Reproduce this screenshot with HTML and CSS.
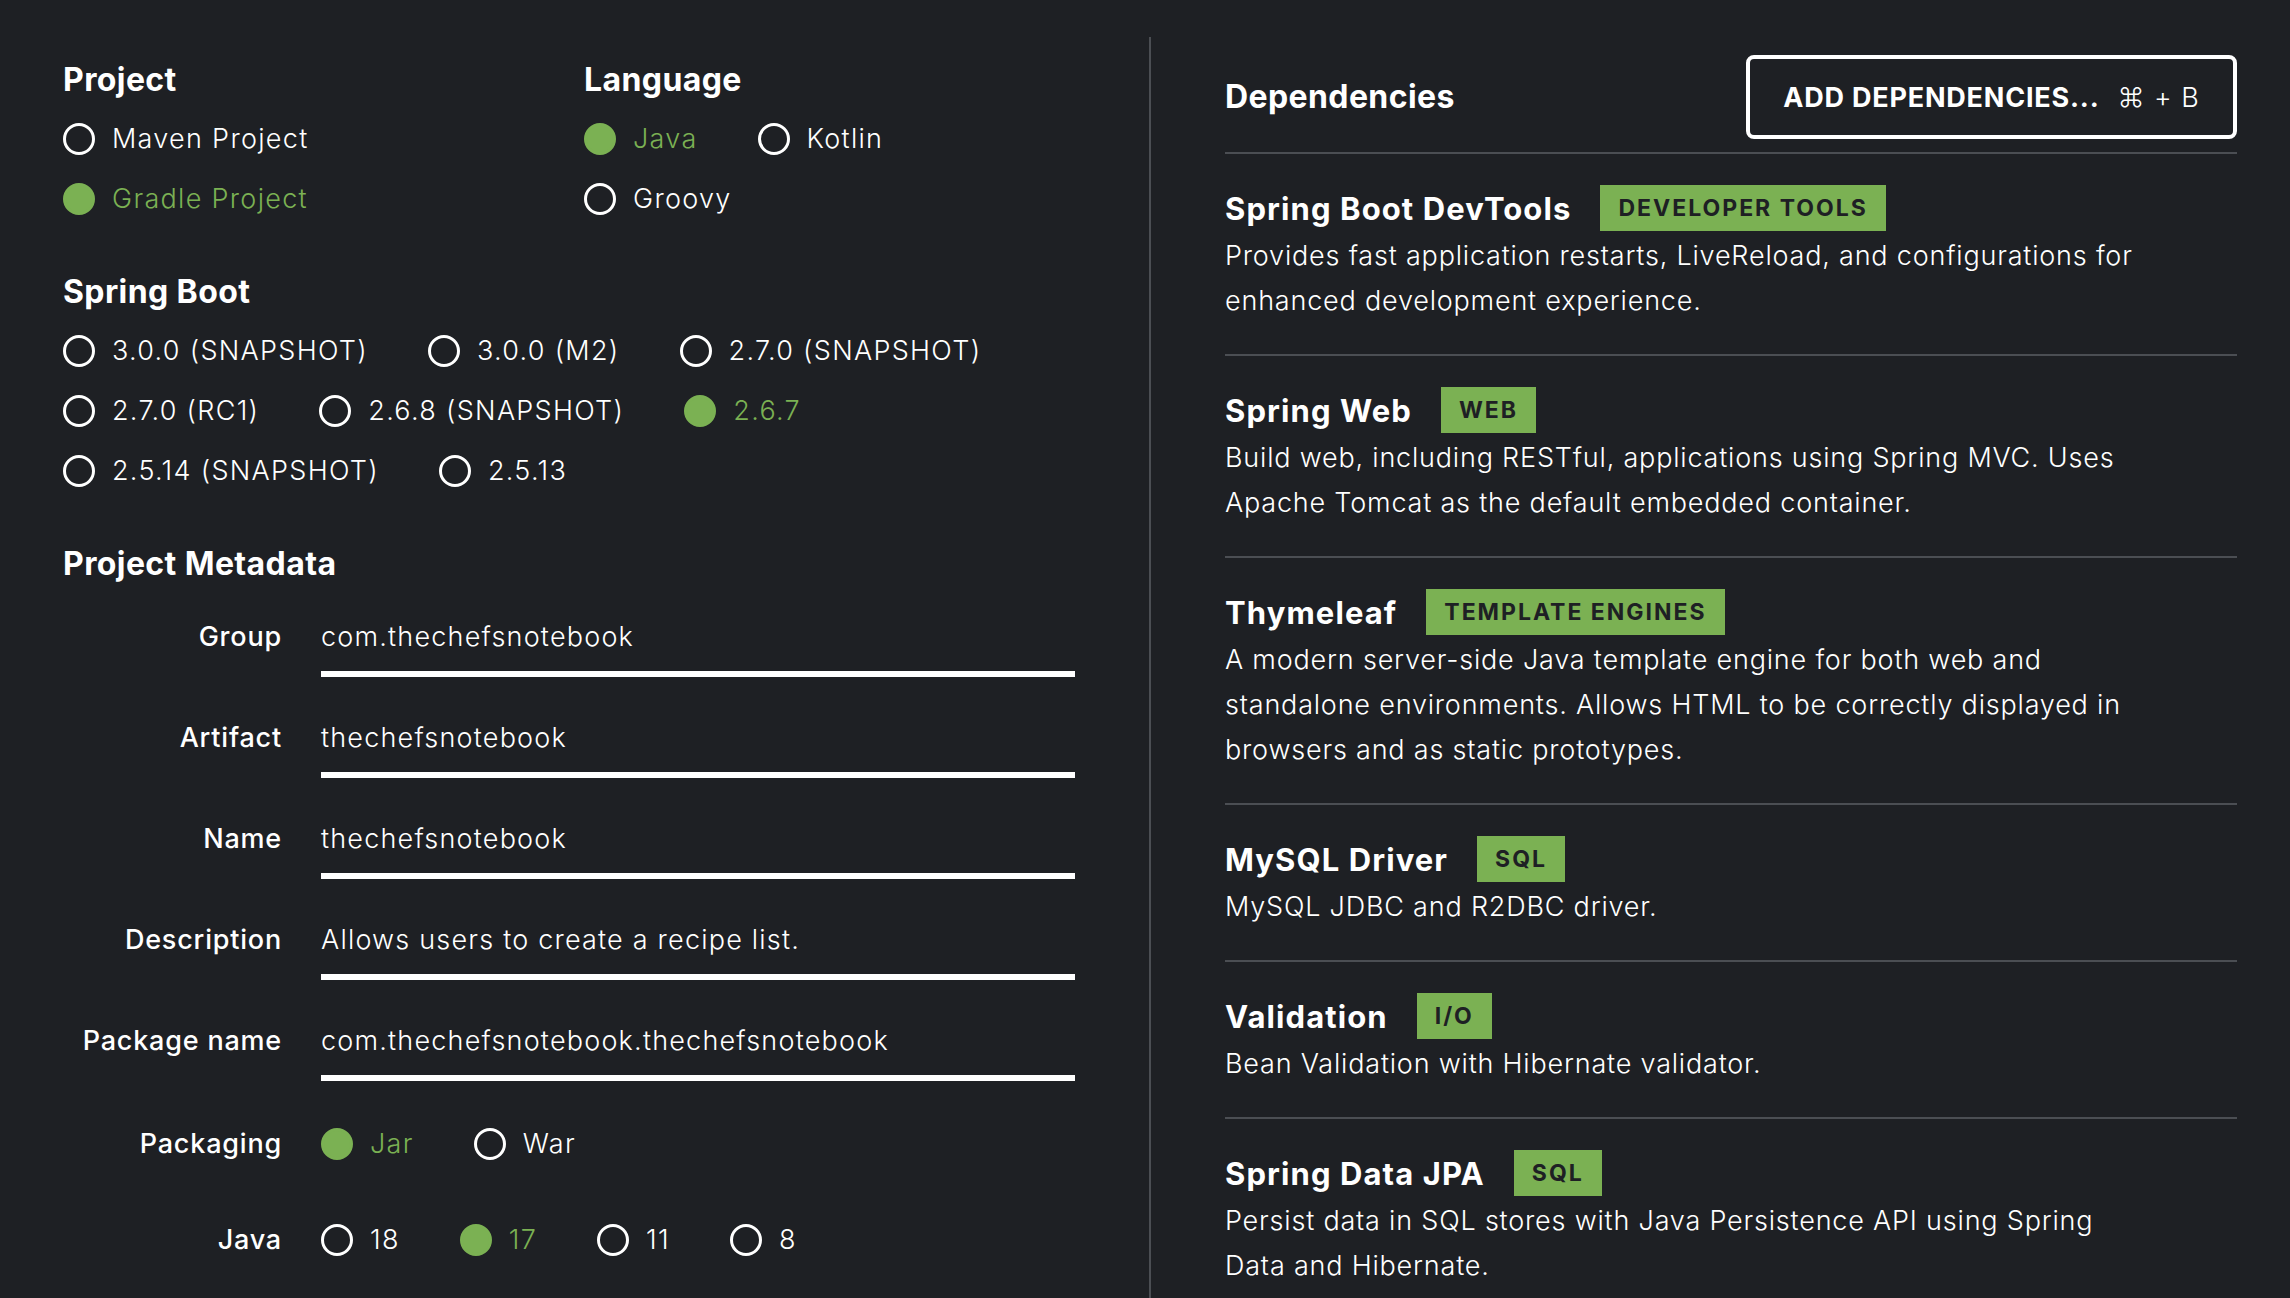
FILE: index.html
```html
<!DOCTYPE html>
<html lang="en">
<head>
<meta charset="utf-8">
<title>Spring Initializr</title>
<link rel="stylesheet" href="styles.css">
</head>
<body>
<div class="page">
  <div class="left">
    <div class="top">
      <div class="group project">
        <h2>Project</h2>
        <div class="opt-row"><span class="radio">Maven Project</span></div>
        <div class="opt-row"><span class="radio on">Gradle Project</span></div>
      </div>
      <div class="group">
        <h2>Language</h2>
        <div class="opt-row"><span class="radio on">Java</span><span class="radio">Kotlin</span></div>
        <div class="opt-row"><span class="radio">Groovy</span></div>
      </div>
    </div>
    <div class="group section">
      <h2>Spring Boot</h2>
      <div class="opt-row"><span class="radio">3.0.0 (SNAPSHOT)</span><span class="radio">3.0.0 (M2)</span><span class="radio">2.7.0 (SNAPSHOT)</span></div>
      <div class="opt-row"><span class="radio">2.7.0 (RC1)</span><span class="radio">2.6.8 (SNAPSHOT)</span><span class="radio on">2.6.7</span></div>
      <div class="opt-row"><span class="radio">2.5.14 (SNAPSHOT)</span><span class="radio">2.5.13</span></div>
    </div>
    <div class="group section meta">
      <h2>Project Metadata</h2>
      <div class="field"><span class="label">Group</span><span class="input">com.thechefsnotebook</span></div>
      <div class="field"><span class="label">Artifact</span><span class="input">thechefsnotebook</span></div>
      <div class="field"><span class="label">Name</span><span class="input">thechefsnotebook</span></div>
      <div class="field"><span class="label">Description</span><span class="input">Allows users to create a recipe list.</span></div>
      <div class="field"><span class="label">Package name</span><span class="input">com.thechefsnotebook.thechefsnotebook</span></div>
      <div class="field choice"><span class="label">Packaging</span><div class="opts"><span class="radio on">Jar</span><span class="radio">War</span></div></div>
      <div class="field choice"><span class="label">Java</span><div class="opts"><span class="radio">18</span><span class="radio on">17</span><span class="radio">11</span><span class="radio">8</span></div></div>
    </div>
  </div>
  <div class="divider"></div>
  <div class="right">
    <div class="dep-head">
      <h2>Dependencies</h2>
      <div class="btn"><span class="btn-main">ADD DEPENDENCIES...</span><span class="btn-key">⌘ + B</span></div>
    </div>
    <div class="dep">
      <div class="dep-title"><h3>Spring Boot DevTools</h3><span class="badge">Developer Tools</span></div>
      <p>Provides fast application restarts, LiveReload, and configurations for enhanced development experience.</p>
    </div>
    <div class="dep">
      <div class="dep-title"><h3>Spring Web</h3><span class="badge">Web</span></div>
      <p>Build web, including RESTful, applications using Spring MVC. Uses Apache Tomcat as the default embedded container.</p>
    </div>
    <div class="dep">
      <div class="dep-title"><h3>Thymeleaf</h3><span class="badge">Template Engines</span></div>
      <p>A modern server-side Java template engine for both web and standalone environments. Allows HTML to be correctly displayed in browsers and as static prototypes.</p>
    </div>
    <div class="dep">
      <div class="dep-title"><h3>MySQL Driver</h3><span class="badge">SQL</span></div>
      <p>MySQL JDBC and R2DBC driver.</p>
    </div>
    <div class="dep">
      <div class="dep-title"><h3>Validation</h3><span class="badge">I/O</span></div>
      <p>Bean Validation with Hibernate validator.</p>
    </div>
    <div class="dep">
      <div class="dep-title"><h3>Spring Data JPA</h3><span class="badge">SQL</span></div>
      <p>Persist data in SQL stores with Java Persistence API using Spring Data and Hibernate.</p>
    </div>
  </div>
</div>
</body>
</html>
```
FILE: styles.css
```css
*, *::before, *::after { box-sizing: border-box; margin: 0; padding: 0; }

html, body {
  background: #1e2024;
  color: #ffffff;
  font-family: Inter, "Open Sans", "DejaVu Sans", sans-serif;
  height: 1298px;
  overflow: hidden;
}

.page {
  display: flex;
  padding: 0 53px 0 63px;
  height: 1298px;
}

.left {
  width: 1012px;
  flex: none;
  padding-top: 60px;
}

.divider {
  width: 2px;
  flex: none;
  background: #4b4e53;
  margin: 37px 74px 0 74px;
}

.right {
  width: 1012px;
  flex: none;
}

h2 {
  font-size: 32px;
  font-weight: 700;
  letter-spacing: 0.4px;
  line-height: 40px;
  margin-bottom: 9px;
}

.top {
  display: flex;
}

.top .project {
  width: 521px;
}

.section {
  margin-top: 43px;
}

.opt-row {
  display: flex;
  gap: 60px;
  height: 60px;
  align-items: center;
}

.radio {
  display: flex;
  align-items: center;
  gap: 17px;
  font-size: 27px;
  font-weight: 300;
  letter-spacing: 1.3px;
  line-height: 44px;
  white-space: nowrap;
}

.radio::before {
  content: "";
  flex: none;
  width: 32px;
  height: 32px;
  border: 3.5px solid #ffffff;
  border-radius: 50%;
}

.radio.on {
  color: #7bb153;
}

.radio.on::before {
  background: #7bb153;
  border-color: #7bb153;
}

.meta h2 {
  margin-bottom: 33px;
}

.field {
  display: grid;
  grid-template-columns: 219px 754px;
  column-gap: 39px;
  align-items: start;
  margin-bottom: 41px;
}

.label {
  text-align: right;
  font-size: 27px;
  font-weight: 500;
  letter-spacing: 0.8px;
  line-height: 40px;
  white-space: nowrap;
}

.input {
  display: block;
  font-size: 27px;
  font-weight: 300;
  letter-spacing: 1.2px;
  line-height: 40px;
  padding-bottom: 14px;
  border-bottom: 6px solid #ffffff;
}

.field.choice {
  align-items: center;
  margin-bottom: 52px;
}

.field.choice .label {
  line-height: 44px;
}

.opts {
  display: flex;
  gap: 60px;
}

.dep-head {
  display: flex;
  justify-content: space-between;
  align-items: center;
  padding-top: 55px;
  padding-bottom: 13px;
  border-bottom: 2px solid #4b4e53;
}

.dep-head h2 {
  margin: 0;
}

.btn {
  width: 491px;
  height: 84px;
  border: 4px solid #ffffff;
  border-radius: 8px;
  display: flex;
  align-items: center;
  justify-content: center;
  gap: 18px;
  font-size: 27px;
}

.btn-main {
  font-weight: 700;
  letter-spacing: 0.8px;
}

.btn-key {
  font-weight: 300;
  letter-spacing: 1px;
}

.dep {
  padding: 31px 0;
  border-bottom: 2px solid #4b4e53;
}

.dep-title {
  display: flex;
  align-items: center;
  gap: 29px;
  height: 46px;
  margin-bottom: 2px;
}

.dep-title h3 {
  font-size: 31px;
  font-weight: 700;
  letter-spacing: 1.1px;
}

.badge {
  background: #7bb153;
  color: #1e2024;
  font-size: 23px;
  font-weight: 700;
  text-transform: uppercase;
  letter-spacing: 2px;
  height: 46px;
  line-height: 46px;
  padding: 0 18px;
}

.dep p {
  max-width: 935px;
  font-size: 27px;
  font-weight: 300;
  letter-spacing: 0.8px;
  line-height: 45px;
}
```
